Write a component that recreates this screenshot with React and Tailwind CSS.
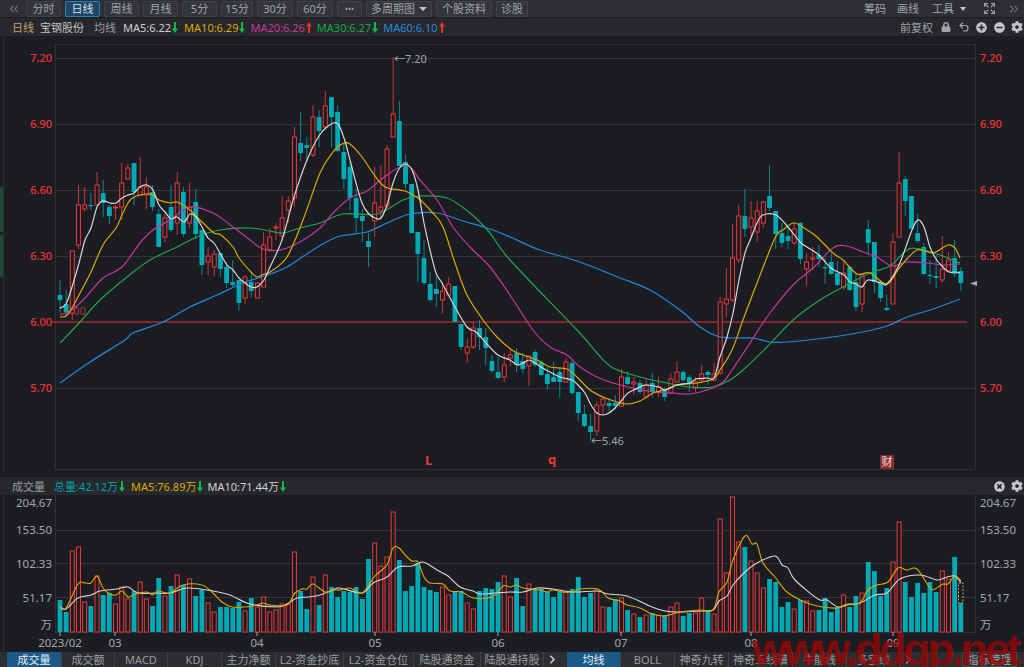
import React from "react";
import { ChevronsLeft, ChevronsRight, ChevronRight, Expand, Undo2 } from "lucide-react";
import { FaCog, FaLock, FaMinusCircle, FaPlusCircle, FaTimesCircle } from "react-icons/fa";

// [x, bodyTop, bodyBottom, high, low, isUp] in screen pixels
const candles = [
  [60,295,300,280,313,0],[66,304,312,290,317,0],[72,251,313,251,320,1],[79,205,245,185,249,1],[85,205,209,187,211,1],
  [91,205,206,193,210,0],[97,185,205,172,206,1],[103,193,203,180,217,0],[110,207,216,205,224,0],[116,207,208,205,220,1],
  [122,183,207,163,220,1],[128,168,179,164,180,1],[134,163,192,163,205,0],[140,187,195,157,195,1],[147,187,195,177,209,1],
  [153,192,207,185,211,0],[159,214,247,209,247,0],[165,218,237,214,242,1],[171,207,230,185,232,0],[177,183,223,172,235,1],
  [184,192,234,187,237,0],[190,207,223,183,228,1],[196,202,234,189,239,0],[202,230,265,230,275,0],[208,256,262,247,275,1],
  [214,254,267,250,276,1],[221,253,269,253,277,0],[227,267,283,262,288,0],[233,282,285,260,288,0],[239,280,303,280,311,0],
  [245,277,298,275,304,1],[251,282,291,273,297,0],[257,283,298,282,298,1],[264,245,287,232,287,1],[270,237,250,228,252,1],
  [276,227,228,223,240,1],[282,218,236,196,240,1],[288,201,210,196,223,1],[294,137,198,127,207,1],[301,143,153,112,161,0],
  [307,145,148,137,161,0],[313,117,155,105,157,1],[319,117,131,110,147,0],[325,106,127,91,130,1],[331,97,117,97,147,0],
  [338,112,151,105,152,0],[344,152,179,143,189,0],[350,167,198,162,210,0],[356,198,218,189,233,0],[362,216,221,209,242,0],
  [368,241,247,233,267,0],[375,203,221,167,237,1],[381,207,211,165,218,1],[387,149,206,145,208,1],[393,114,137,57,137,1],
  [399,121,166,101,166,0],[405,162,184,154,189,0],[412,184,233,184,233,0],[418,232,254,232,282,0],[424,258,283,240,285,0],
  [430,284,300,272,302,0],[436,289,294,276,307,0],[442,291,300,282,313,1],[449,284,295,277,295,1],[455,286,322,286,322,0],
  [461,324,347,324,350,0],[467,347,353,339,363,1],[473,328,347,322,349,1],[480,328,337,320,350,0],[486,337,348,328,365,0],
  [492,361,371,355,373,0],[498,372,378,357,379,0],[504,365,377,353,382,1],[510,355,358,348,366,1],[517,353,365,348,372,0],
  [523,361,369,353,373,0],[529,356,366,356,386,1],[535,352,365,350,367,0],[541,362,375,360,376,0],[548,374,384,367,390,0],
  [554,377,382,362,382,0],[560,372,382,368,398,0],[566,362,382,358,383,1],[572,363,393,360,395,0],[578,392,413,392,421,0],
  [585,414,426,405,427,0],[591,426,432,414,440,0],[597,405,431,401,436,1],[603,399,405,397,415,1],[609,403,406,398,413,0],
  [615,403,406,395,410,0],[622,377,406,369,407,1],[628,377,384,371,385,0],[634,382,384,377,395,1],[640,383,392,380,394,0],
  [646,385,397,379,399,1],[653,383,392,373,397,0],[659,387,392,377,397,1],[665,389,397,387,401,0],[671,379,393,373,394,1],
  [677,372,382,361,382,1],[683,372,380,370,382,0],[690,377,383,375,392,0],[696,382,388,377,392,1],[702,374,380,365,382,1],
  [708,372,375,370,385,0],[714,374,380,363,382,1],[720,302,373,297,375,1],[727,299,304,268,317,1],[733,258,300,224,302,1],
  [739,216,260,205,263,1],[745,216,229,189,237,0],[751,218,227,201,237,1],[757,211,232,201,242,1],[763,202,223,201,228,1],
  [770,196,208,165,211,0],[776,211,234,211,249,0],[782,233,243,223,247,0],[788,236,241,227,249,0],[794,229,243,223,245,1],
  [800,223,259,222,264,0],[807,262,269,253,286,1],[813,258,259,247,270,1],[819,255,259,245,267,0],[825,267,268,258,284,0],
  [831,262,274,252,275,0],[838,273,285,261,286,0],[844,273,287,262,290,1],[850,267,290,266,291,0],[856,282,307,273,311,0],
  [862,275,304,273,312,1],[868,229,243,220,255,0],[875,242,282,242,293,0],[881,283,298,280,302,0],[887,308,310,295,311,0],
  [893,242,304,233,304,1],[899,183,237,152,237,1],[905,179,201,176,216,0],[912,196,229,196,229,0],[918,233,241,214,243,0],
  [924,247,274,243,275,0],[930,275,276,260,284,0],[936,276,278,255,288,0],[942,269,280,236,283,1],[949,260,271,252,272,1],
  [955,258,274,240,277,0],[961,271,283,267,291,0],
];

const ma5 = "60,308 66,304 72,287 79,263 85,240 91,228 97,207 103,201 110,203 116,203 122,198 128,195 134,193 140,187 147,185 153,190 159,205 165,212 171,219 177,217 184,222 190,214 196,217 202,227 208,238 214,243 221,255 227,265 233,270 239,278 245,283 251,287 257,287 264,280 270,267 282,240 294,197 307,160 319,136 331,124 338,124 344,138 350,160 356,183 362,203 368,213 375,218 381,218 387,205 393,183 399,169 405,164 412,170 418,190 424,223 430,250 436,273 442,283 455,307 467,327 476,332 486,343 498,355 510,360 517,365 523,363 529,360 535,363 541,367 548,371 560,377 572,380 578,385 585,393 591,405 597,413 603,415 609,413 615,408 622,400 628,393 640,387 646,385 659,387 665,390 677,385 690,383 696,379 708,378 714,378 720,357 727,337 733,313 739,280 745,253 751,238 757,223 763,215 776,215 788,227 800,242 807,247 819,255 831,268 844,275 850,282 856,284 862,287 868,280 881,283 887,284 899,265 912,230 918,220 924,227 930,247 936,259 942,266 949,272 955,272 960,273";
const ma10 = "60,317 66,316 72,308 79,295 91,272 103,245 116,228 122,215 128,203 134,197 147,194 153,195 159,200 171,203 177,202 190,210 202,222 214,233 221,235 233,247 239,258 251,272 257,277 264,274 270,272 287,257 303,220 320,173 333,152 342,144 350,144 362,157 373,173 385,187 405,191 418,198 432,212 443,227 455,263 467,295 483,320 497,337 512,350 523,355 537,360 550,367 567,369 578,378 590,390 603,397 617,402 627,404 640,401 653,393 665,390 677,385 697,383 713,379 720,370 732,350 743,320 757,283 775,238 783,230 794,223 807,230 817,237 833,253 843,260 857,274 870,273 887,284 900,267 917,250 933,253 948,245 955,248 960,258";
const ma20 = "60,315 72,310 85,298 103,278 122,267 140,243 153,230 170,220 190,207 213,213 233,227 250,240 263,249 280,250 300,242 320,228 333,213 350,198 367,191 383,178 400,167 410,167 420,180 437,200 453,227 470,247 490,267 510,295 533,330 550,347 567,355 580,367 597,377 613,383 633,388 653,392 673,393 690,394 707,390 723,382 732,370 750,343 767,317 793,285 813,268 833,248 847,246 863,252 877,257 892,266 907,262 927,263 943,265 960,264";
const ma30 = "60,343 63,340 80,322 100,300 127,277 150,260 177,247 197,237 220,230 250,228 270,231 283,233 300,228 320,223 343,214 377,214 403,200 420,196 447,198 470,213 490,233 510,260 577,330 597,353 613,368 640,377 667,383 690,387 713,387 730,380 743,370 767,347 793,320 820,300 843,287 870,273 890,266 907,250 920,249 940,255 960,263";
const ma60 = "60,383 90,362 125,340 133,333 163,322 190,307 217,295 243,283 270,274 287,267 313,250 337,237 367,232 387,223 410,214 437,213 463,221 487,228 510,237 540,250 580,262 620,278 650,290 680,310 700,327 717,336 733,338 753,338 770,342 787,342 817,339 857,333 887,326 907,317 933,309 960,299";

// bar tops in order, negative = red (up day)
const volumes = [
  600,612,-551,-547,-602,606,-576,595,593,-604,-587,-599,591,-582,-599,606,578,-596,586,-575,585,-579,596,589,-603,-612,607,607,608,602,-611,598,-607,-597,-612,-610,-604,-604,-552,591,609,-577,605,-575,587,597,
  591,592,587,599,559,-543,-566,-557,-512,560,591,586,563,587,590,592,-587,-595,591,591,-603,-609,591,588,589,582,-576,-597,578,606,-584,590,589,592,597,592,-592,589,577,597,593,-590,-607,607,599,-598,610,-614,617,-615,613,-615,615,-607,-603,
  616,613,-613,-598,610,-614,-519,-573,-497,-542,547,-561,-573,-588,579,582,607,602,-609,600,-601,-611,610,598,612,607,-595,607,596,-593,562,571,596,588,-562,-522,582,597,583,593,582,592,-571,-579,557,603,
];

const volMa5 = "60,607 66,608 78,584 85,583 91,583 97,576 103,588 110,594 116,595 122,591 128,597 133,595 140,593 147,592 153,595 158,591 170,593 183,585 202,585 213,593 222,602 232,607 245,607 257,605 263,603 270,605 287,605 295,593 302,589 307,589 313,584 325,592 333,590 340,590 350,588 362,593 375,576 387,565 393,548 399,548 406,556 412,561 418,562 424,577 430,583 443,584 450,591 462,592 473,598 492,597 503,586 510,587 517,585 523,588 540,590 547,592 553,590 563,592 573,592 580,589 598,589 608,598 620,601 627,605 640,608 652,614 665,616 680,612 700,610 713,610 719,592 727,582 733,560 745,536 752,544 757,544 763,563 775,577 787,592 807,603 823,607 837,608 847,604 860,603 868,590 877,585 888,582 898,568 907,570 917,569 930,588 935,589 943,584 948,584 955,576 961,581";
const volMa10 = "60,607 66,609 78,598 91,595 100,591 117,589 128,587 138,593 157,593 170,593 188,588 213,591 230,595 250,604 277,607 287,604 297,598 308,597 320,595 333,590 340,588 362,593 373,583 387,577 398,567 412,566 423,562 437,570 448,576 460,587 473,591 480,594 495,593 510,592 523,592 537,588 553,589 573,592 597,591 608,594 627,596 652,607 665,611 680,612 700,611 713,610 719,601 727,596 733,585 745,572 757,563 775,556 782,565 788,568 795,580 818,599 827,600 838,607 847,605 860,603 875,595 887,593 900,579 920,575 937,580 947,577 955,576 961,583";

const periodButtons = [
  { label: "分时", w: "w-[35px]" },
  { label: "日线", w: "w-[35px]", active: true },
  { label: "周线", w: "w-[35px]" },
  { label: "月线", w: "w-[35px]" },
  { label: "5分", w: "w-[35px]" },
  { label: "15分", w: "w-[32px]" },
  { label: "30分", w: "w-[36px]" },
  { label: "60分", w: "w-[36px]" },
  { label: "•••", w: "w-[25px]", tiny: true },
  { label: "多周期图", w: "w-[66px]", caret: true },
  { label: "个股资料", w: "w-[56px]" },
  { label: "诊股", w: "w-[32px]" },
];

const leftTabs = [
  { label: "成交量", w: "w-[55px]", active: true },
  { label: "成交额", w: "w-[53px]" },
  { label: "MACD", w: "w-[53px]" },
  { label: "KDJ", w: "w-[54px]" },
  { label: "主力净额", w: "w-[54px]" },
  { label: "L2-资金抄底", w: "w-[68px]" },
  { label: "L2-资金仓位", w: "w-[70px]" },
  { label: "陆股通资金", w: "w-[67px]" },
  { label: "陆股通持股", w: "w-[63px]" },
];

const rightTabs = [
  { label: "均线", w: "w-[54px]", active: true },
  { label: "BOLL", w: "w-[54px]" },
  { label: "神奇九转", w: "w-[54px]" },
  { label: "神奇五线谱", w: "w-[64px]" },
  { label: "牛能线", w: "w-[54px]" },
  { label: "多空线", w: "w-[54px]" },
];

const snap = (x) => 60 + 6.17 * Math.round((x - 60) / 6.17);

// catmull-rom through the sampled points, the source lines are smooth
const smooth = (str) => {
  const p = str.split(" ").map((s) => s.split(",").map(Number));
  let d = `M${p[0][0]} ${p[0][1]}`;
  for (let i = 0; i < p.length - 1; i++) {
    const a = p[i - 1] || p[i];
    const b = p[i];
    const c = p[i + 1];
    const e = p[i + 2] || c;
    const c1x = b[0] + (c[0] - a[0]) / 6;
    const c1y = b[1] + (c[1] - a[1]) / 6;
    const c2x = c[0] - (e[0] - b[0]) / 6;
    const c2y = c[1] - (e[1] - b[1]) / 6;
    d += ` C${c1x} ${c1y} ${c2x} ${c2y} ${c[0]} ${c[1]}`;
  }
  return d;
};

const Arrow = ({ up }) => (
  <svg width="6" height="11" viewBox="0 0 6 11" className="ml-px shrink-0">
    {up ? (
      <path d="M3 0 L6 4.5 L4 4.5 L4 11 L2 11 L2 4.5 L0 4.5 Z" fill="#e9302f" />
    ) : (
      <path d="M3 11 L6 6.5 L4 6.5 L4 0 L2 0 L2 6.5 L0 6.5 Z" fill="#14b84a" />
    )}
  </svg>
);

const Candle = ({ c }) => {
  const [rawX, top, bottom, high, low, up] = c;
  const x = snap(rawX);
  const color = up ? "#e8383b" : "#00aab5";
  return (
    <g>
      <line x1={x} x2={x} y1={high} y2={low} stroke={up ? "#c93438" : "#0a8790"} strokeWidth="1" />
      {up ? (
        <rect x={x - 2} y={top} width="4" height={Math.max(bottom - top, 1)} fill="#1b1d22" stroke={color} strokeWidth="1" />
      ) : (
        <rect x={x - 2.4} y={top} width="4.8" height={Math.max(bottom - top, 1.2)} fill={color} />
      )}
    </g>
  );
};

const MainChart = () => (
  <svg width="1020" height="436" viewBox="4 36 1020 436" className="block">
    <rect x="55.5" y="44.5" width="920" height="425" fill="none" stroke="#2e3035" />
    {[58, 124, 190, 256, 388].map((y) => (
      <line key={y} x1="56" x2="975" y1={y + 0.5} y2={y + 0.5} stroke="#33353a" />
    ))}
    <line x1="52" x2="967" y1="322" y2="322" stroke="#a32a2e" strokeWidth="1.6" />
    {[["7.20", 62], ["6.90", 128], ["6.60", 194], ["6.30", 260], ["6.00", 326], ["5.70", 392]].map(([t, y]) => (
      <g key={t} fontSize="11" fontWeight="500" fill="#ee3335">
        <text x="52" y={y} textAnchor="end">{t}</text>
        <text x="980" y={y}>{t}</text>
      </g>
    ))}
    <text x="64" y="315" fontSize="11" fill="#a8383c">6.00</text>
    {candles.map((c) => (
      <Candle key={c[0]} c={c} />
    ))}
    <path d={smooth(ma60)} fill="none" stroke="#2388dc" strokeWidth="1.2" />
    <path d={smooth(ma30)} fill="none" stroke="#1da64d" strokeWidth="1.2" />
    <path d={smooth(ma20)} fill="none" stroke="#c8359c" strokeWidth="1.2" />
    <path d={smooth(ma10)} fill="none" stroke="#dca800" strokeWidth="1.2" />
    <path d={smooth(ma5)} fill="none" stroke="#d8d8d8" strokeWidth="1.2" />
    <text x="394" y="63" fontSize="11" fill="#a3a5a8">←7.20</text>
    <text x="591" y="445" fontSize="11" fill="#a3a5a8">←5.46</text>
    <text x="425" y="465" fontSize="13" fontWeight="700" fill="#e5383b">L</text>
    <text x="548" y="464" fontSize="13" fontWeight="700" fill="#e5383b">q</text>
    <rect x="880" y="455" width="14" height="14" rx="1" fill="#8a2c30" />
    <text x="887" y="466" fontSize="11" textAnchor="middle" fill="#e9dcd6">财</text>
    <path d="M970 283.5 L977 281 L977 286 Z" fill="#a9abae" />
  </svg>
);

const VolumeChart = () => (
  <svg width="1020" height="157" viewBox="4 495 1020 157" className="block">
    <line x1="55.5" x2="55.5" y1="495" y2="632" stroke="#2e3035" />
    <line x1="975.5" x2="975.5" y1="495" y2="632" stroke="#2e3035" />
    <line x1="55" x2="976" y1="632.5" y2="632.5" stroke="#2e3035" />
    {[530, 563, 597].map((y) => (
      <line key={y} x1="56" x2="975" y1={y + 0.5} y2={y + 0.5} stroke="#33353a" />
    ))}
    {[["204.67", 507], ["153.50", 534], ["102.33", 568], ["51.17", 602], ["万", 629]].map(([t, y]) => (
      <g key={t} fontSize="11.5" fill="#a5a7aa">
        <text x="52" y={y} textAnchor="end">{t}</text>
        <text x="980" y={y}>{t}</text>
      </g>
    ))}
    {volumes.map((v, i) => {
      const x = 60 + 6.17 * i;
      const top = Math.abs(v);
      return v < 0 ? (
        <rect key={i} x={x - 2} y={top} width="4" height={632 - top} fill="#1b1d22" stroke="#e8383b" />
      ) : (
        <rect key={i} x={x - 2.4} y={top} width="4.8" height={632 - top} fill="#00aab5" />
      );
    })}
    <rect x="958.5" y="583" width="4.5" height="20" fill="none" stroke="#c9a26a" strokeDasharray="2 1.5" />
    <path d={smooth(volMa10)} fill="none" stroke="#d8d8d8" strokeWidth="1.1" />
    <path d={smooth(volMa5)} fill="none" stroke="#dca800" strokeWidth="1.1" />
    {[["2023/02", 60], ["03", 115], ["04", 257], ["05", 375], ["06", 498], ["07", 621], ["08", 751], ["09", 893]].map(([t, x]) => (
      <g key={t}>
        <line x1={x} x2={x} y1="632" y2="636" stroke="#a5a7aa" />
        <text x={x} y="647" fontSize="11.5" textAnchor="middle" fill="#a5a7aa">{t}</text>
      </g>
    ))}
  </svg>
);

const Tab = ({ t }) => (
  <div
    className={`${t.w} h-full flex items-center justify-center border-r border-[#3f4146] text-[11px] ${
      t.active ? "bg-[#1b5a87] text-[#e6eef5]" : "text-[#9a9c9f]"
    }`}
  >
    {t.label}
  </div>
);

const App = () => {
  return (
    <div className="relative w-[1024px] h-[667px] overflow-hidden flex flex-col bg-[#1b1d22] font-['Noto_Sans','Noto_Sans_CJK_SC',sans-serif] leading-none">
      {/* top toolbar */}
      <div className="h-[18px] flex items-center bg-[#2d2f34] border-b border-[#1b1d22]">
        <ChevronsLeft size={14} strokeWidth={1.5} className="ml-[7px] mr-[5px] text-[#a5a7aa]" />
        <div className="flex gap-[4px] h-[16px]">
          {periodButtons.map((b) => (
            <div
              key={b.label}
              className={`${b.w} flex items-center justify-center border rounded-[2px] ${b.tiny ? "text-[8px]" : "text-[11px]"} ${
                b.active
                  ? "border-[#2a7fb8] bg-[#1d4763] text-[#d4e2ec]"
                  : "border-[#3f4146] bg-[#33353a] text-[#a2a4a7]"
              }`}
            >
              {b.label}
              {b.caret && <span className="ml-[4px] border-x-[4px] border-t-[4px] border-x-transparent border-t-[#c5c7ca]"></span>}
            </div>
          ))}
        </div>
        <div className="ml-auto flex items-center text-[11px] text-[#a2a4a7]">
          <span className="mr-[11px]">筹码</span>
          <span className="mr-[13px]">画线</span>
          <span>工具</span>
          <span className="ml-[6px] border-x-[3px] border-t-[4px] border-x-transparent border-t-[#c5c7ca]"></span>
          <Expand size={13} className="ml-[17px] text-[#a2a4a7]" />
          <ChevronsRight size={14} strokeWidth={1.5} className="ml-[11px] mr-[3px] text-[#a2a4a7]" />
        </div>
      </div>

      {/* quote row */}
      <div className="h-[18px] flex items-center bg-[#26282c] text-[11px]">
        <span className="ml-[12px] text-[#c9a071]">日线</span>
        <span className="ml-[6px] text-[#c4c4c4]">宝钢股份</span>
        <span className="ml-[10px] text-[#9a9c9f]">均线</span>
        <span className="ml-[7px] text-[#d0d0d0]">MA5:6.22</span>
        <Arrow />
        <span className="ml-[6px] text-[#dca800]">MA10:6.29</span>
        <Arrow />
        <span className="ml-[5px] text-[#c8359c]">MA20:6.26</span>
        <Arrow up />
        <span className="ml-[5px] text-[#14a84a]">MA30:6.27</span>
        <Arrow />
        <span className="ml-[5px] text-[#2388dc]">MA60:6.10</span>
        <Arrow up />
        <div className="ml-auto flex items-center text-[#a2a4a7]">
          <span>前复权</span>
          <FaLock size={10} className="ml-[8px]" />
          <Undo2 size={12} className="ml-[7px]" strokeWidth={2.4} />
          <FaPlusCircle size={11} className="ml-[6px] text-[#c4c6c8]" />
          <FaMinusCircle size={11} className="ml-[7px] text-[#c4c6c8]" />
          <FaCog size={12} className="ml-[6px] mr-[1px] text-[#c4c6c8]" />
        </div>
      </div>

      {/* price panel */}
      <div className="flex">
        <div className="w-[4px] flex flex-col border-r border-[#2e3035]">
          <div className="h-[151px]"></div>
          <div className="h-[45px] bg-[#1c4a2f]"></div>
          <div className="h-[3px]"></div>
          <div className="h-[42px] bg-[#1c4a2f]"></div>
        </div>
        <MainChart />
      </div>

      {/* volume title row */}
      <div className="mt-[5px] h-[18px] flex items-center bg-[#26282c] text-[11px]">
        <span className="ml-[12px] text-[#9a9c9f]">成交量</span>
        <span className="ml-[9px] text-[#00a3ad]">总量:42.12万</span>
        <Arrow />
        <span className="ml-[6px] text-[#dca800]">MA5:76.89万</span>
        <Arrow />
        <span className="ml-[4px] text-[#d0d0d0]">MA10:71.44万</span>
        <Arrow />
        <div className="ml-auto flex items-center text-[#c4c6c8]">
          <FaTimesCircle size={11} />
          <FaCog size={12} className="ml-[6px] mr-[1px]" />
        </div>
      </div>

      {/* volume panel */}
      <div className="flex">
        <div className="w-[4px] border-r border-[#2e3035]"></div>
        <VolumeChart />
      </div>

      {/* indicator tabs */}
      <div className="h-[15px] flex items-center bg-[#2b2d31] pl-[7px]">
        {leftTabs.map((t) => (
          <Tab key={t.label} t={t} />
        ))}
        <ChevronRight size={13} strokeWidth={3} className="ml-[2px] mr-[8px] text-[#d0d0d0]" />
        {rightTabs.map((t) => (
          <Tab key={t.label} t={t} />
        ))}
        <ChevronRight size={13} strokeWidth={3} className="ml-[1px] text-[#d0d0d0]" />
        <div className="ml-auto mr-[7px] w-[55px] h-full flex items-center justify-center border border-[#45474c] bg-[#33353a] text-[11px] text-[#a2a4a7]">
          指标管理
        </div>
      </div>

      {/* site watermark */}
      <div className="absolute left-[752px] top-[635px] text-[45px] leading-[30px] tracking-[-3.3px] font-bold font-['Liberation_Sans',sans-serif] text-[rgba(150,8,8,0.82)] whitespace-nowrap">
        www.ddgp.net
      </div>
    </div>
  );
};

export default App;
